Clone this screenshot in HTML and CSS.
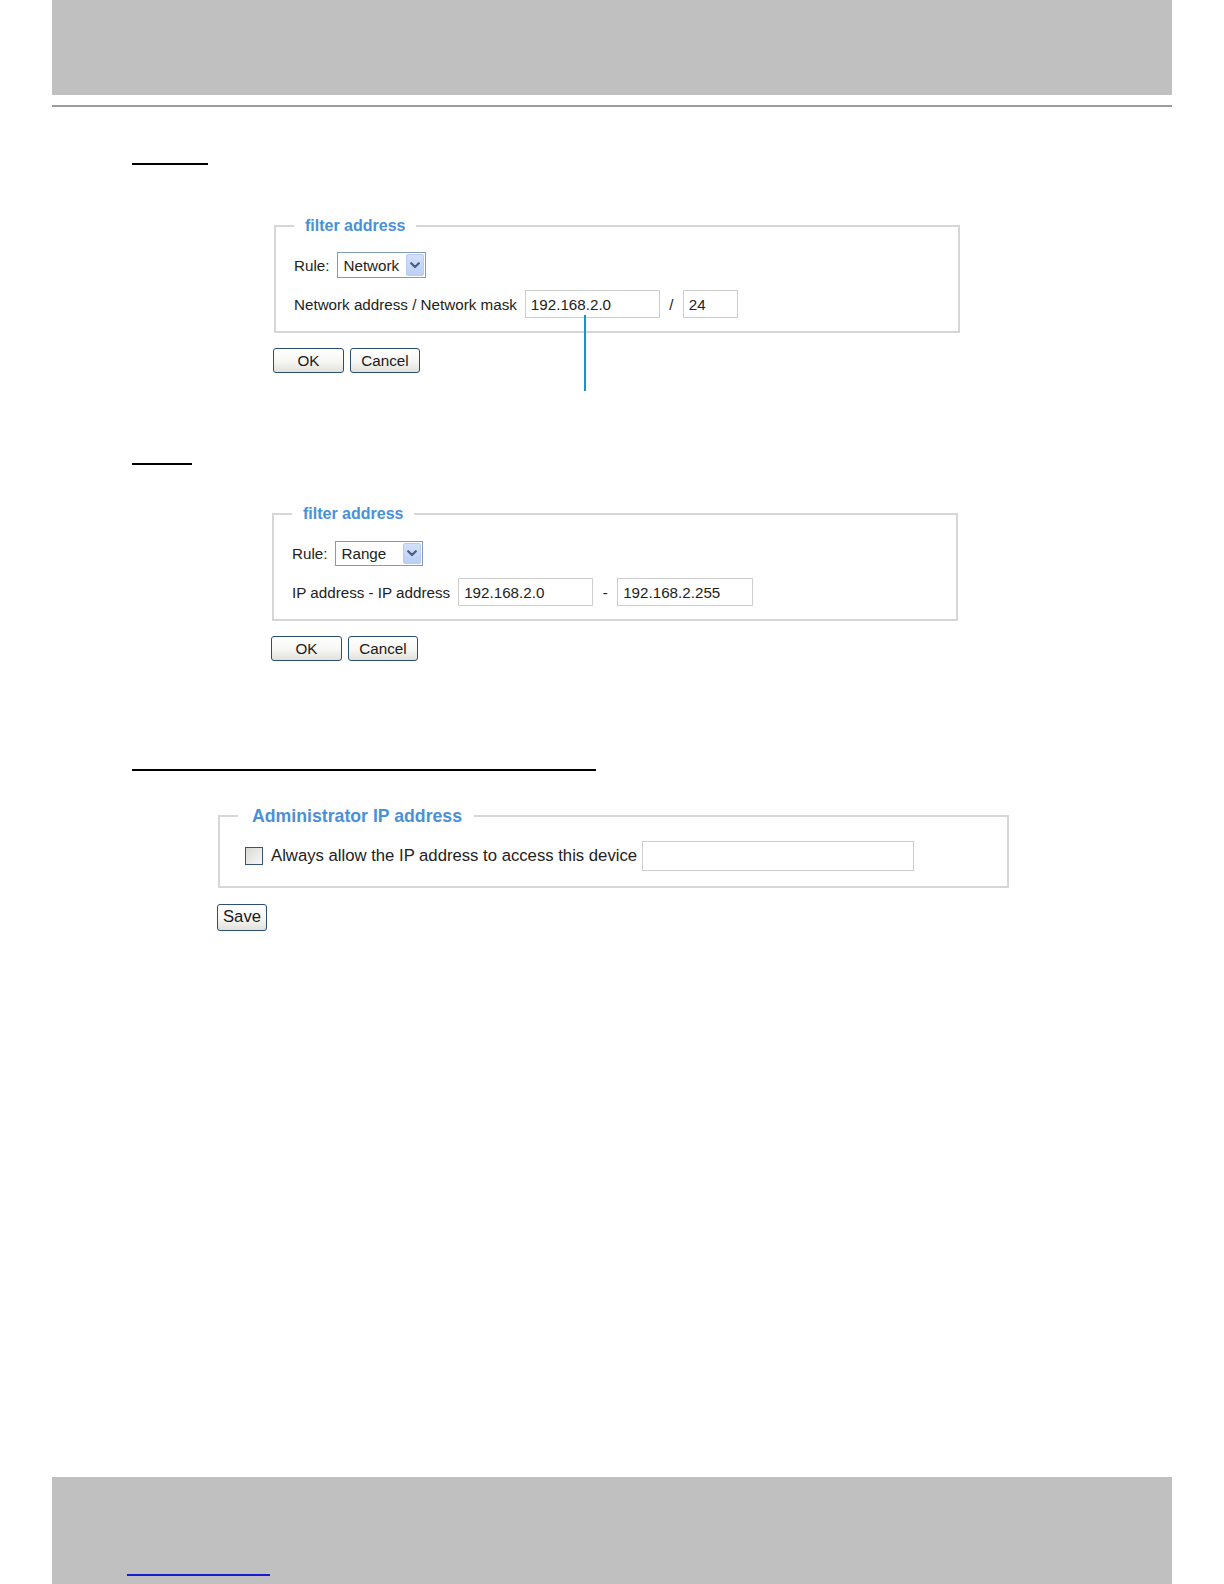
FILE: index.html
```html
<!DOCTYPE html>
<html lang="en">
<head>
<meta charset="utf-8">
<title>Access list - filter address</title>
<link rel="stylesheet" href="styles.css">
</head>
<body>
<div class="page">
  <header class="top-band"></header>
  <div class="top-rule"></div>

  <main class="content">
    <section class="block">
      <div class="heading-bar bar-1"></div>
      <fieldset class="panel panel-1">
        <legend class="panel-title">filter address</legend>
        <div class="row row-rule">
          <span class="label">Rule:</span>
          <div class="select-box sel-network">
            <span class="select-text">Network</span>
            <span class="select-arrow"><svg width="10" height="7" viewBox="0 0 10 7"><path d="M1.2 1.2 L5 5 L8.8 1.2" fill="none" stroke="#4a5f86" stroke-width="2.2" stroke-linecap="round" stroke-linejoin="round"/></svg></span>
          </div>
        </div>
        <div class="row row-fields">
          <span class="label">Network address / Network mask</span>
          <span class="field-wrap">
            <span class="text-input in-135">192.168.2.0</span>
            <span class="callout-line"></span>
          </span>
          <span class="sep sep-slash">/</span>
          <span class="text-input in-55">24</span>
        </div>
      </fieldset>
      <div class="buttons btns-1">
        <button class="btn btn-ok">OK</button>
        <button class="btn btn-cancel">Cancel</button>
      </div>
    </section>

    <section class="block">
      <div class="heading-bar bar-2"></div>
      <fieldset class="panel panel-2">
        <legend class="panel-title">filter address</legend>
        <div class="row row-rule">
          <span class="label">Rule:</span>
          <div class="select-box sel-range">
            <span class="select-text">Range</span>
            <span class="select-arrow"><svg width="10" height="7" viewBox="0 0 10 7"><path d="M1.2 1.2 L5 5 L8.8 1.2" fill="none" stroke="#4a5f86" stroke-width="2.2" stroke-linecap="round" stroke-linejoin="round"/></svg></span>
          </div>
        </div>
        <div class="row row-fields">
          <span class="label label-ip">IP address - IP address</span>
          <span class="text-input in-135">192.168.2.0</span>
          <span class="sep sep-dash">-</span>
          <span class="text-input in-136">192.168.2.255</span>
        </div>
      </fieldset>
      <div class="buttons btns-2">
        <button class="btn btn-ok">OK</button>
        <button class="btn btn-cancel">Cancel</button>
      </div>
    </section>

    <section class="block">
      <div class="heading-bar bar-3"></div>
      <fieldset class="panel panel-3">
        <legend class="panel-title title-lg">Administrator IP address</legend>
        <div class="row row-admin">
          <input type="checkbox" class="check">
          <span class="label label-lg">Always allow the IP address to access this device</span>
          <span class="text-input in-272"></span>
        </div>
      </fieldset>
      <div class="buttons btns-3">
        <button class="btn btn-save">Save</button>
      </div>
    </section>
  </main>

  <footer class="bottom-band">
    <span class="footer-link"></span>
  </footer>
</div>
</body>
</html>
```

FILE: styles.css
```css
html, body {
  margin: 0;
  padding: 0;
  background: #ffffff;
}

body {
  font-family: "Liberation Sans", Arial, sans-serif;
  color: #222222;
}

.page {
  width: 1224px;
  height: 1584px;
  display: flex;
  flex-direction: column;
  overflow: hidden;
}

.top-band {
  margin: 0 52px;
  height: 95px;
  background: #c0c0c0;
  flex: none;
}

.top-rule {
  margin: 10px 52px 0;
  height: 2px;
  background: #9c9c9c;
  flex: none;
}

.content {
  display: flex;
  flex-direction: column;
}

.block {
  display: flex;
  flex-direction: column;
}

.heading-bar {
  height: 2px;
  background: #000000;
  margin-left: 132px;
}

.bar-1 { margin-top: 56px; width: 76px; }
.bar-2 { margin-top: 90px; width: 60px; }
.bar-3 { margin-top: 108px; width: 464px; }

/* Fieldset panels */
.panel {
  box-sizing: border-box;
  margin: 0;
  border: 2px solid #d6d6d6;
  padding: 16px 18px 13px 18px;
  min-width: 0;
}

.panel-1 { margin-left: 274px; margin-top: 51px; width: 686px; }
.panel-2 { margin-left: 272px; margin-top: 39px; width: 686px; }
.panel-3 { margin-left: 218px; margin-top: 34px; width: 791px; padding: 14px 18px 15px 18px; }

.panel-title {
  padding: 0 11px;
  font-size: 16px;
  line-height: 20px;
  font-weight: bold;
  color: #4a90d9;
}

.title-lg {
  font-size: 17.7px;
  line-height: 22px;
  padding: 0 12px 0 14px;
}

.row {
  display: flex;
  align-items: center;
  gap: 8px;
  font-size: 15.2px;
}

.row-rule { height: 26px; }
.row-fields { height: 28px; margin-top: 12px; gap: 0; }
.row-admin { height: 30px; padding-left: 7px; gap: 0; }

.label { white-space: nowrap; }
.row-fields .label { margin-right: 8px; }
.label-ip { margin-right: 9px; }
.label-lg { font-size: 16.7px; margin-left: 8px; margin-right: 5px; }

/* Select */
.select-box {
  box-sizing: border-box;
  height: 26px;
  border: 1px solid #7f9db9;
  background: #ffffff;
  display: flex;
  align-items: center;
  justify-content: space-between;
  padding: 0 1px 0 5px;
}

.sel-network { width: 89px; }
.sel-range { width: 88px; height: 25px; }

.select-text { font-size: 15.2px; color: #222; }

.select-arrow {
  box-sizing: border-box;
  width: 18px;
  height: 22px;
  background: linear-gradient(#d3e0fb, #bccff5);
  border: 1px solid #b9cbf0;
  border-radius: 2px;
  display: flex;
  align-items: center;
  justify-content: center;
}

.sel-range .select-arrow { height: 21px; }

/* Text inputs */
.text-input {
  box-sizing: border-box;
  display: flex;
  align-items: center;
  height: 28px;
  border: 1px solid #cdcdcd;
  padding-left: 5px;
  background: #ffffff;
  font-size: 15.2px;
  color: #222;
}

.in-135 { width: 135px; }
.in-136 { width: 136px; }
.in-55 { width: 55px; }
.in-272 { width: 272px; height: 30px; }

.field-wrap { position: relative; display: flex; }

.callout-line {
  position: absolute;
  left: 59px;
  top: 25px;
  width: 2px;
  height: 76px;
  background: #1b93c0;
}

.sep {
  display: inline-block;
  text-align: center;
  font-size: 15.2px;
}
.sep-slash { width: 23px; }
.sep-dash { width: 24px; }

/* Checkbox */
.check {
  appearance: none;
  -webkit-appearance: none;
  box-sizing: border-box;
  margin: 0;
  width: 18px;
  height: 18px;
  border: 1px solid #33557a;
  background: linear-gradient(135deg, #d9d9d6, #f7f7f5);
}

/* Buttons */
.buttons {
  display: flex;
  gap: 6px;
  margin-top: 15px;
}

.btns-1 { margin-left: 273px; }
.btns-2 { margin-left: 271px; }
.btns-3 { margin-left: 217px; margin-top: 16px; }

.btn {
  box-sizing: border-box;
  height: 25px;
  margin: 0;
  padding: 0;
  border: 1px solid #2b4e75;
  border-radius: 3px;
  background: linear-gradient(#ffffff 0%, #f6f6f3 55%, #e2e0da 100%);
  font-family: "Liberation Sans", Arial, sans-serif;
  font-size: 15.2px;
  color: #1a1a1a;
  line-height: 1;
}

.btn-ok { width: 71px; }
.btn-cancel { width: 70px; }
.btn-save { width: 50px; height: 27px; font-size: 16.7px; }

/* Footer */
.bottom-band {
  margin: auto 52px 0;
  height: 107px;
  background: #c0c0c0;
  flex: none;
  box-sizing: border-box;
  padding: 97px 0 0 75px;
}

.footer-link {
  display: block;
  width: 143px;
  height: 2px;
  background: #1b1bcf;
}
```
